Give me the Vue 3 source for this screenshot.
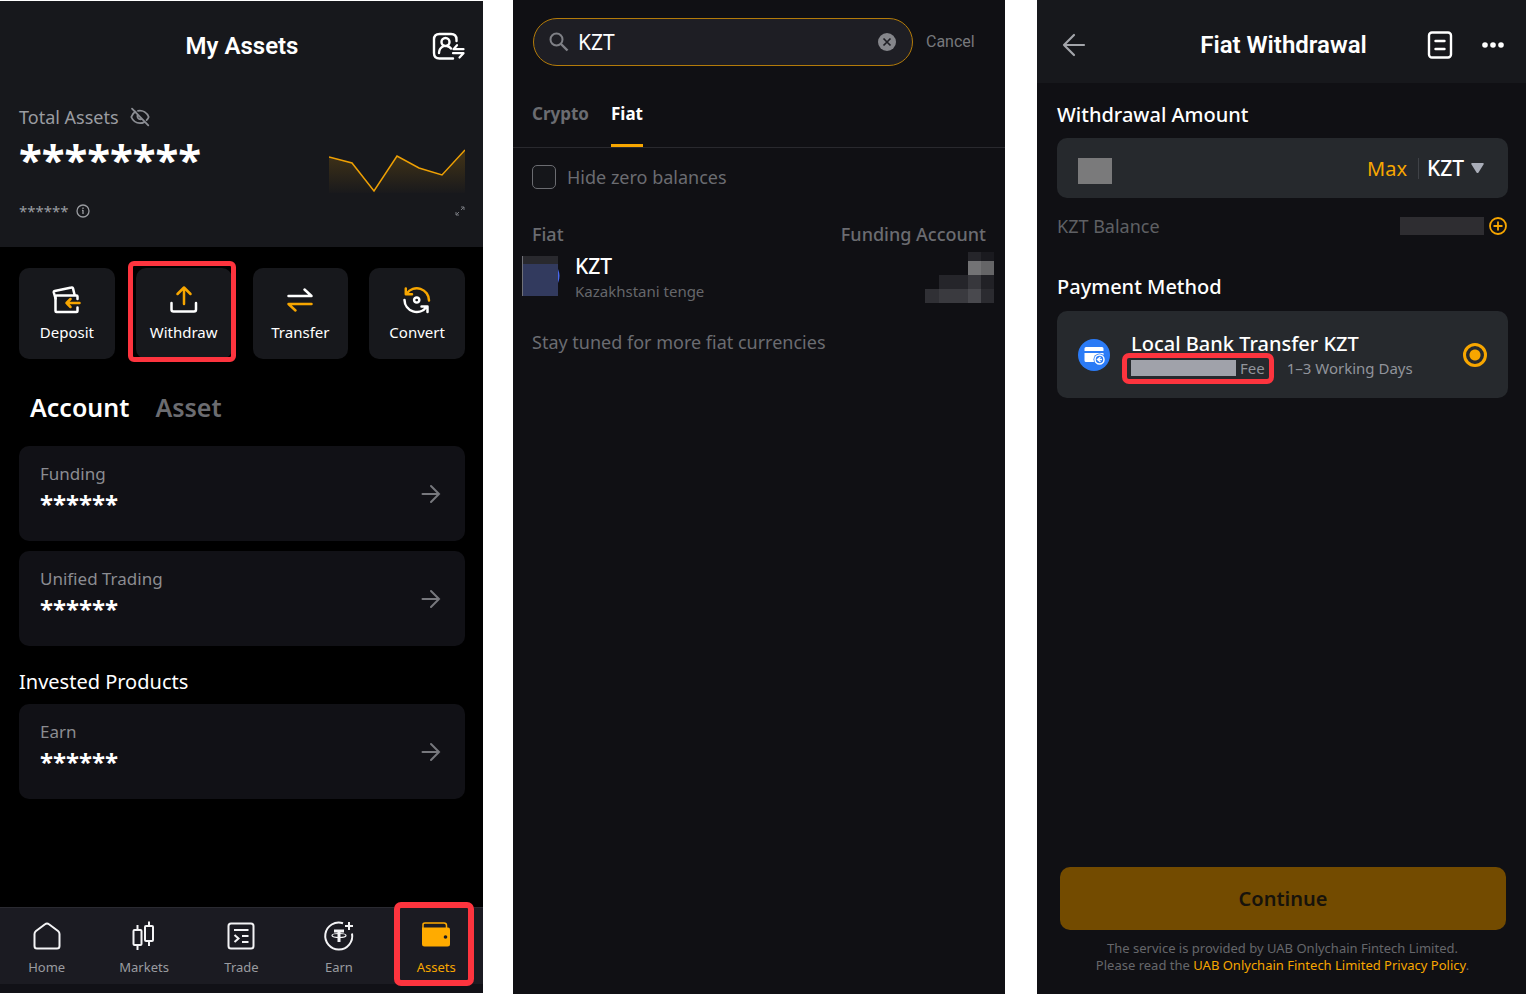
<template>
  <main class="screens">
    <section class="screen assets">
      <div class="summary">
        <header class="assets-title">
          <h1>My Assets</h1>
          <button class="icon-btn switch" aria-label="Switch account">
            <svg width="34" height="30" viewBox="0 0 34 30" fill="none" stroke="#fff" stroke-width="2.4" stroke-linecap="round" stroke-linejoin="round">
              <path d="M22 27.500H8.500Q3 27.500 3 22V8.500Q3 3 8.500 3H20Q25.500 3 25.500 8.500V10" />
              <circle cx="14.500" cy="11" r="4" />
              <path d="M8 22C8 18.500 10.500 16 13 15M16 15C18 15.500 19 16.300 20 17.500" />
              <path d="M32.500 18.200H22.500L26 14.200M22 22.200H32.500L28.500 26.500" stroke-width="2.200" />
            </svg>
          </button>
        </header>
        <div class="total">
          <span>Total Assets</span>
          <button class="icon-btn" aria-label="Show balance">
            <svg width="20" height="20" viewBox="0 0 20 20" fill="none" stroke="#8b8d93" stroke-width="1.800" stroke-linecap="round">
              <path d="M5.500 4.600C3.600 5.800 2 8 1.300 10C3 14 6.300 16.200 10 16.200C11.500 16.200 13 15.800 14.300 15.100M8 3.900C13 3 17 6 18.700 10C18.200 11.200 17.500 12.300 16.600 13.200" />
              <path d="M2 1.600L18.300 18.300M7.500 8.300C7 10.500 8.500 12.700 11.200 12.200" />
            </svg>
          </button>
        </div>
        <div class="value">
          <strong>********</strong>
          <svg width="136" height="50" viewBox="0 0 136 50">
            <defs>
              <linearGradient id="area" x1="0" y1="0" x2="0" y2="1">
                <stop offset="0" stop-color="#f7a600" stop-opacity="0.200" />
                <stop offset="1" stop-color="#f7a600" stop-opacity="0.010" />
              </linearGradient>
            </defs>
            <path d="M0 14L23 20L45 48L68 13L90 25L113 32L136 7V50H0Z" fill="url(#area)" />
            <path d="M0 14L23 20L45 48L68 13L90 25L113 32L136 7" fill="none" stroke="#eea004" stroke-width="1.500" />
          </svg>
        </div>
        <div class="change">
          <span>******</span>
          <svg width="14" height="14" viewBox="0 0 14 14" fill="none" stroke="#9a9ca1" stroke-width="1.300">
            <circle cx="7" cy="7" r="6" /><path d="M7 6V10M7 3.600V4.900M6 6.300H7" />
          </svg>
          <svg class="expand" width="10" height="10" viewBox="0 0 10 10" fill="none" stroke="#77797f">
            <path d="M6 4L9 1M6 1H9V4M4 6L1 9M1 6V9H4" />
          </svg>
        </div>
      </div>

      <div class="actions">
        <button v-for="a in actions" :key="a.label" class="action" :class="{ marked: a.marked }">
          <svg width="30" height="30" viewBox="0 0 30 30" fill="none" stroke-width="2.500" stroke-linecap="round" stroke-linejoin="round">
            <path v-for="d in a.white" :key="d" :d="d" stroke="#fff" />
            <path v-for="d in a.gold" :key="d" :d="d" stroke="#f7a600" />
          </svg>
          <span>{{ a.label }}</span>
        </button>
      </div>

      <nav class="account-tabs">
        <button class="on">Account</button>
        <button>Asset</button>
      </nav>

      <div class="cards">
        <a v-for="name in ['Funding', 'Unified Trading']" :key="name" href="#" class="card">
          <span class="card-text"><span>{{ name }}</span><strong>******</strong></span>
          <svg width="20" height="20" viewBox="0 0 20 20"><path d="M1.500 10H18M10 2L18 10L10 18" /></svg>
        </a>
      </div>
      <h2>Invested Products</h2>
      <div class="cards">
        <a href="#" class="card">
          <span class="card-text"><span>Earn</span><strong>******</strong></span>
          <svg width="20" height="20" viewBox="0 0 20 20"><path d="M1.500 10H18M10 2L18 10L10 18" /></svg>
        </a>
      </div>

      <footer class="tabbar">
        <nav>
          <a href="#">
            <svg class="line" viewBox="0 0 32 32"><path d="M16 3.500Q17 3.500 18 4.300L27 11Q28.500 12.200 28.500 14V26Q28.500 28.500 26 28.500H6Q3.500 28.500 3.500 26V14Q3.500 12.200 5 11L14 4.300Q15 3.500 16 3.500Z" /></svg>
            Home
          </a>
          <a href="#">
            <svg class="line" viewBox="0 0 32 32"><path d="M6.500 10H12.500Q13.500 10 13.500 11V24Q13.500 25 12.500 25H6.500Q5.500 25 5.500 24V11Q5.500 10 6.500 10ZM9.500 5V10M9.500 25V30M18 6H24Q25 6 25 7V20Q25 21 24 21H18Q17 21 17 20V7Q17 6 18 6ZM21 1.500V6M21 21V26" /></svg>
            Markets
          </a>
          <a href="#">
            <svg class="line" viewBox="0 0 32 32"><path d="M6 3.500H26Q28.500 3.500 28.500 6V26Q28.500 28.500 26 28.500H6Q3.500 28.500 3.500 26V6Q3.500 3.500 6 3.500ZM9 10H23.500M17 16H23.500M17 22H23.500M9.500 15L13.500 18.500L9.500 22" /></svg>
            Trade
          </a>
          <a href="#">
            <svg class="line" viewBox="0 0 32 32"><path d="M20 3.200A13.500 13.500 0 1 0 29 13.500M26 2V10M22 6H30" /><path d="M11 11H21M16 11V22" stroke-width="3" /><ellipse cx="16" cy="15.500" rx="7" ry="2" stroke-width="1.200" /></svg>
            Earn
          </a>
          <a href="#" class="current">
            <svg viewBox="0 0 32 32"><path d="M3 8V4.500Q3 3 5 3H24Q26.500 3 26.500 5.500V8" fill="none" stroke="#ffab00" stroke-width="1.500" /><path d="M2 7.500H28Q30 7.500 30 9.500V24Q30 26.500 27.500 26.500H4.500Q2 26.500 2 24Z" fill="#ffab00" /><circle cx="25.500" cy="17" r="1.800" fill="#1b1b22" /></svg>
            Assets
          </a>
        </nav>
      </footer>
    </section>

    <section class="screen picker">
      <form class="search-row" @submit.prevent>
        <label class="search">
          <svg width="20" height="20" viewBox="0 0 20 20" fill="none" stroke="#7f8086" stroke-width="2"><circle cx="7.500" cy="7.500" r="6" /><path d="M12 12L18.500 18.500" stroke-width="2.400" /></svg>
          <input v-model="query" type="text" aria-label="Search currency" />
          <button type="button" class="icon-btn" aria-label="Clear" @click="query = ''">
            <svg width="18" height="18" viewBox="0 0 18 18"><circle cx="9" cy="9" r="9" fill="#85868b" /><path d="M5.500 5.500L12.500 12.500M12.500 5.500L5.500 12.500" stroke="#1e1e24" stroke-width="1.700" /></svg>
          </button>
        </label>
        <button type="button" class="cancel">Cancel</button>
      </form>
      <nav class="currency-tabs">
        <button>Crypto</button>
        <button class="on">Fiat</button>
      </nav>
      <label class="hide-zero">
        <input v-model="hideZero" type="checkbox" />
        Hide zero balances
      </label>
      <table>
        <thead>
          <tr><th>Fiat</th><th>Funding Account</th></tr>
        </thead>
        <tbody>
          <tr>
            <td>
              <div class="currency">
                <svg width="38" height="40" viewBox="0 0 38 40">
                  <circle cx="21" cy="20" r="16.500" fill="#4868ee" />
                  <path d="M0 0H36V40H0Z" fill="#323a5e" /><path d="M0 0H36V8H0Z" fill="#29292e" /><path d="M0 0H1V40H0Z" fill="#707178" />
                </svg>
                <div><strong>KZT</strong><small>Kazakhstani tenge</small></div>
              </div>
            </td>
            <td>
              <svg class="mosaic" width="70" height="51" viewBox="0 0 70 51">
                <rect v-for="c in mosaic" :key="c.join()" :x="c[0]" :y="c[1]" :width="c[2]" :height="c[3]" :fill="c[4]" />
              </svg>
            </td>
          </tr>
        </tbody>
      </table>
      <p class="stay">Stay tuned for more fiat currencies</p>
    </section>

    <section class="screen withdrawal">
      <header class="bar">
        <button class="icon-btn" aria-label="Back">
          <svg width="24" height="24" viewBox="0 0 24 24" fill="none" stroke="#a3a5aa" stroke-width="2.200" stroke-linecap="round" stroke-linejoin="round"><path d="M22 12H2M12 2L2 12L12 22" /></svg>
        </button>
        <h1>Fiat Withdrawal</h1>
        <div class="bar-tools">
          <button class="icon-btn" aria-label="Orders">
            <svg width="26" height="28" viewBox="0 0 26 28" fill="none" stroke="#fff" stroke-width="2.400" stroke-linecap="round"><rect x="2" y="1.500" width="22" height="25" rx="3" /><path d="M8.500 10H17.500M8.500 18H17.500" /></svg>
          </button>
          <button class="icon-btn" aria-label="More">
            <svg width="24" height="8" viewBox="0 0 24 8" fill="#fff"><circle cx="4" cy="4" r="2.800" /><circle cx="12" cy="4" r="2.800" /><circle cx="20" cy="4" r="2.800" /></svg>
          </button>
        </div>
      </header>
      <form class="withdraw-form" @submit.prevent>
        <h2><label for="amount">Withdrawal Amount</label></h2>
        <div class="amount">
          <span class="masked"></span>
          <input id="amount" v-model="amount" type="text" inputmode="decimal" />
          <button type="button" class="max">Max</button>
          <span class="divider"></span>
          <select v-model="currency" aria-label="Currency">
            <option>KZT</option>
          </select>
          <svg width="13" height="11" viewBox="0 0 13 11"><path d="M1 0H12Q13.200 .4 12.500 1.600L7.500 9.500Q6.500 10.700 5.500 9.500L.5 1.600Q-.2 .4 1 0Z" fill="#a9adb8" /></svg>
        </div>
        <div class="balance">
          <span>KZT Balance</span>
          <span class="balance-mask"></span>
          <button type="button" class="icon-btn" aria-label="Add funds">
            <svg width="18" height="18" viewBox="0 0 18 18" fill="none" stroke="#f7a600" stroke-width="1.800"><circle cx="9" cy="9" r="8" /><path d="M4.500 9H13.500M9 4.500V13.500" /></svg>
          </button>
        </div>
        <h2>Payment Method</h2>
        <label class="method">
          <svg width="32" height="32" viewBox="0 0 32 32">
            <circle cx="16" cy="16" r="16" fill="#2b7bf6" />
            <path d="M8 8H24Q25.500 8 25.500 9.500V12H6.500V9.500Q6.500 8 8 8ZM6.500 14H25.500V23H8Q6.500 23 6.500 21.500Z" fill="#fff" />
            <circle cx="21.500" cy="20.500" r="6" fill="#2b7bf6" /><circle cx="21.500" cy="20.500" r="4.500" fill="none" stroke="#fff" stroke-width="1.500" />
            <path d="M22.500 18L19.500 20.500L22.500 23M20 20.500H24" fill="none" stroke="#fff" stroke-width="1.400" />
          </svg>
          <span class="method-text">
            <strong>Local Bank Transfer KZT</strong>
            <span class="terms">
              <span class="fee"><i></i>Fee</span>
              <span>1–3 Working Days</span>
            </span>
          </span>
          <input v-model="method" type="radio" name="method" value="bank" />
        </label>
        <button class="continue" disabled>Continue</button>
        <p class="legal">
          The service is provided by UAB Onlychain Fintech Limited.<br />
          Please read the <a href="#">UAB Onlychain Fintech Limited Privacy Policy</a>.
        </p>
      </form>
    </section>
  </main>
</template>

<script setup>
import { ref } from "vue";

const query = ref("KZT");
const hideZero = ref(false);
const amount = ref("");
const currency = ref("KZT");
const method = ref("bank");

const actions = [
  {
    label: "Deposit",
    white: ["M25.500 14V11.500Q25.500 10.500 24.500 10.500H4.500Q3.500 10.500 3.500 11.500V26Q3.500 27 4.500 27H24.500Q25.500 27 25.500 26V22.500", "M3.500 13.500L1.800 7.500Q1.500 6.300 2.700 6L19.500 2.500Q20.700 2.200 21 3.400L22.500 9.500"],
    gold: ["M27.500 18H14.500M18.500 14L14.500 18L18.500 22"],
  },
  {
    label: "Withdraw",
    white: ["M2.500 18V24.500Q2.500 26.500 4.500 26.500H25Q27 26.500 27 24.500V18"],
    gold: ["M15 19V3M8.500 9L15 2.500L21.500 9"],
    marked: true,
  },
  {
    label: "Transfer",
    white: ["M3.500 11H26.500L19.500 4.500"],
    gold: ["M26.500 19H3.500L10.500 25.500"],
  },
  {
    label: "Convert",
    white: ["M2.500 15A12.200 12.200 0 0 0 24.500 22M19.500 21.500H25.500V27", "M17.300 15A2.600 2.600 0 1 1 12.100 15A2.600 2.600 0 1 1 17.300 15Z"],
    gold: ["M27 15.500A12.200 12.200 0 0 0 4.800 8.500M3.800 3.500V9.300H10"],
  },
];

// x, y, width, height, fill
const mosaic = [
  [43, 0, 13, 9, "#25252a"],
  [56, 0, 13, 9, "#1a1a1f"],
  [43, 9, 13, 14, "#737375"],
  [56, 9, 13, 14, "#656567"],
  [14, 23, 29, 14, "#25252a"],
  [43, 23, 13, 14, "#37373c"],
  [56, 23, 13, 14, "#212126"],
  [0, 37, 14, 14, "#303035"],
  [14, 37, 29, 14, "#3a3a3f"],
  [43, 37, 13, 14, "#49494e"],
  [56, 37, 13, 14, "#2b2b30"],
];
</script>

<style>
body {
  margin: 0;
  background: #fff;
}
</style>

<style scoped>
.screens {
  display: flex;
  min-height: 100vh;
  font-family: "Noto Sans", sans-serif;
  color: #fff;
}
.screens * {
  box-sizing: border-box;
}
.screen {
  display: flex;
  flex-direction: column;
  min-width: 0;
}
h1,
h2,
p {
  margin: 0;
}
h1 {
  font: 600 24px/32px Roboto, sans-serif;
}
h2 {
  font-size: 20px;
  line-height: 28px;
  font-weight: 400;
}
button,
input,
select {
  margin: 0;
  padding: 0;
  border: 0;
  background: none;
  color: inherit;
  font: inherit;
}
button {
  cursor: pointer;
}
a {
  color: inherit;
  text-decoration: none;
}
svg {
  display: block;
  flex: none;
}

/* assets */
.assets {
  flex: 483 1 0;
  margin: 1px 0;
  background: #000;
}
.summary {
  padding: 0 18px 26px 19px;
  background: #17181c;
}
.assets-title {
  display: grid;
  grid-template-columns: 1fr auto 1fr;
  align-items: center;
  height: 90px;
}
.assets-title h1 {
  grid-column: 2;
}
.switch {
  justify-self: end;
}
.total {
  display: flex;
  align-items: center;
  gap: 11px;
  margin-top: 12px;
  font-size: 18px;
  line-height: 28px;
  color: #9a9ca1;
}
.value {
  display: flex;
  align-items: flex-end;
  justify-content: space-between;
  height: 62px;
}
.value strong {
  align-self: flex-start;
  font-size: 42px;
  line-height: 56px;
}
.change {
  display: flex;
  align-items: center;
  gap: 7px;
  margin-top: 8px;
  font-size: 15px;
  line-height: 20px;
  color: #9a9ca1;
}
.expand {
  margin-left: auto;
}
.actions {
  display: grid;
  grid-template-columns: repeat(4, 1fr);
  gap: 21px;
  padding: 21px 18px 0 19px;
}
.action {
  position: relative;
  display: flex;
  flex-direction: column;
  align-items: center;
  gap: 6px;
  padding: 17px 0 16px;
  border-radius: 10px;
  background: #17181c;
  font-size: 15px;
  line-height: 22px;
}
.marked::after {
  content: "";
  position: absolute;
  inset: -7px -4px -3px -8px;
  border: 5px solid #fd343e;
  border-radius: 6px;
}
.account-tabs {
  display: flex;
  gap: 26px;
  padding: 31px 30px 22px;
  font-size: 25px;
  line-height: 34px;
  color: #6b6c70;
}
.account-tabs .on {
  color: #fff;
}
.account-tabs button {
  font-weight: 600;
}
.cards {
  display: flex;
  flex-direction: column;
  gap: 10px;
  padding: 0 18px 0 19px;
}
.card {
  display: flex;
  align-items: center;
  justify-content: space-between;
  height: 95px;
  padding: 0 24px 0 21px;
  border-radius: 10px;
  background: #111116;
}
.card-text {
  display: flex;
  flex-direction: column;
  padding-bottom: 8px;
  font-size: 17px;
  line-height: 28px;
  color: #8b8c91;
}
.card-text strong {
  font-size: 24px;
  line-height: 32px;
  color: #fff;
}
.card svg {
  fill: none;
  stroke: #77787d;
  stroke-width: 2;
  stroke-linecap: round;
}
.assets h2 {
  padding: 22px 19px 8px;
}
.tabbar {
  margin-top: auto;
  padding-bottom: 9px;
  border-top: 1px solid #2a2a31;
  background: linear-gradient(#1b1b22, #1b1b22) no-repeat #111117;
  background-size: 100% 76px;
}
.tabbar nav {
  display: grid;
  grid-template-columns: repeat(5, 1fr);
  margin: 0 -2px;
}
.tabbar a {
  position: relative;
  display: flex;
  flex-direction: column;
  align-items: center;
  gap: 5px;
  padding: 12px 0 7px;
  font-size: 13px;
  line-height: 20px;
  color: #9a9ba0;
}
.tabbar svg {
  width: 32px;
  height: 32px;
}
.tabbar .line {
  fill: none;
  stroke: #f4f4f6;
  stroke-width: 2;
}
.tabbar .current {
  color: #f7a600;
}
.tabbar .current::after {
  content: "";
  position: absolute;
  inset: -6px 11px -2px 6px;
  border: 6px solid #fd343e;
  border-radius: 7px;
}

/* currency picker */
.picker {
  flex: 492 1 0;
  margin-left: 30px;
  background: #101014;
}
.search-row {
  display: flex;
  align-items: center;
  gap: 13px;
  padding: 18px 34px 0 20px;
}
.search {
  display: flex;
  flex: 1;
  align-items: center;
  height: 48px;
  padding: 0 16px 0 15px;
  border: 1px solid #b37b0a;
  border-radius: 24px;
  background: #1e1e24;
}
.search input {
  flex: 1;
  min-width: 0;
  padding-left: 9px;
  outline: 0;
  font-size: 21px;
}
.cancel {
  font: 16px/24px Roboto, sans-serif;
  color: #77787c;
}
.currency-tabs {
  display: flex;
  gap: 22px;
  margin-top: 15px;
  padding: 0 19px;
  border-bottom: 1px solid #29292e;
  font-size: 17px;
  color: #6b6c71;
}
.currency-tabs button {
  height: 66px;
  padding-top: 2px;
  border-bottom: 3px solid transparent;
  font-weight: 700;
}
.currency-tabs .on {
  border-color: #f7a600;
  color: #fff;
}
.hide-zero {
  display: flex;
  align-items: center;
  gap: 11px;
  align-self: flex-start;
  margin: 17px 19px 0;
  font-size: 18px;
  line-height: 24px;
  color: #6b6c71;
}
.hide-zero input {
  appearance: none;
  width: 24px;
  height: 24px;
  border: 1px solid #6b6c71;
  border-radius: 5px;
  background: #15161a;
}
.hide-zero input:checked {
  background: #f7a600;
}
table {
  width: 100%;
  margin-top: 31px;
  border-spacing: 0;
}
th {
  padding: 0 19px;
  font-size: 18px;
  line-height: 28px;
  font-weight: 500;
  text-align: left;
  color: #6b6c71;
}
th:last-child {
  text-align: right;
}
td {
  height: 58px;
  padding: 0 10px 0 9px;
}
.currency {
  display: flex;
  align-items: center;
  gap: 15px;
}
.currency svg {
  margin-bottom: 2px;
}
.currency div {
  padding-top: 2px;
}
.currency strong,
.currency small {
  display: block;
}
.currency strong {
  font-size: 21px;
  line-height: 26px;
  font-weight: 500;
}
.currency small {
  font-size: 15px;
  line-height: 24px;
  color: #66676b;
}
.mosaic {
  margin-left: auto;
}
.stay {
  margin: 22px 19px 0;
  font-size: 18px;
  line-height: 28px;
  color: #6b6c71;
}

/* withdrawal */
.withdrawal {
  flex: 489 1 0;
  margin-left: 32px;
  background: #101014;
}
.bar {
  display: grid;
  grid-template-columns: 1fr auto 1fr;
  align-items: center;
  height: 83px;
  padding: 7px 21px 0 25px;
  background: #17181c;
}
.bar-tools {
  display: flex;
  align-items: center;
  justify-content: flex-end;
  gap: 28px;
}
.withdraw-form {
  display: flex;
  flex: 1;
  flex-direction: column;
  padding: 18px 18px 20px 20px;
}
.withdraw-form h2 {
  font-weight: 500;
}
.amount {
  display: flex;
  align-items: center;
  height: 60px;
  margin-top: 9px;
  padding: 0 24px 0 21px;
  border-radius: 10px;
  background: #26292d;
  font-size: 20px;
}
.masked {
  width: 34px;
  height: 26px;
  margin-top: 6px;
  background: #7a7a7b;
}
.amount input {
  flex: 1;
  min-width: 0;
  height: 40px;
  padding-left: 8px;
  outline: 0;
}
.max {
  color: #f7a600;
}
.divider {
  width: 1px;
  height: 21px;
  margin: 0 8px 0 11px;
  background: #3f4247;
}
.amount select {
  appearance: none;
  margin-right: 6px;
  font-size: 21px;
  font-weight: 500;
}
.balance {
  display: flex;
  align-items: center;
  margin: 14px 1px 0 0;
  font-size: 18px;
  line-height: 28px;
  color: #5f6064;
}
.balance-mask {
  width: 84px;
  height: 18px;
  margin: 0 5px 0 auto;
  background: #2e2d31;
}
.balance + h2 {
  margin-top: 33px;
}
.method {
  display: flex;
  align-items: center;
  height: 87px;
  margin-top: 10px;
  padding: 0 21px;
  border-radius: 10px;
  background: #26292d;
}
.method-text {
  flex: 1;
  margin-left: 21px;
}
.method-text strong {
  display: block;
  font-size: 20px;
  line-height: 26px;
  font-weight: 500;
}
.terms {
  display: flex;
  gap: 22px;
  font-size: 15px;
  line-height: 22px;
  color: #91949b;
}
.fee {
  position: relative;
  display: flex;
  align-items: center;
  gap: 4px;
}
.fee i {
  width: 105px;
  height: 16px;
  background: #a0a2aa;
}
.fee::after {
  content: "";
  position: absolute;
  inset: -4px -9px -5px;
  border: 5px solid #fd343e;
  border-radius: 7px;
}
.method input {
  appearance: none;
  width: 24px;
  height: 24px;
  border: 3px solid #f7a600;
  border-radius: 50%;
}
.method input:checked {
  background: radial-gradient(circle, #f7a600 5px, transparent 6px);
}
.continue {
  height: 63px;
  margin: auto 2px 10px 3px;
  border-radius: 10px;
  background: #734b00;
  color: #17130b;
  font-size: 20px;
  font-weight: 600;
}
.legal {
  font-size: 13px;
  line-height: 17px;
  text-align: center;
  color: #66676b;
}
.legal a {
  color: #f7a600;
}
</style>
